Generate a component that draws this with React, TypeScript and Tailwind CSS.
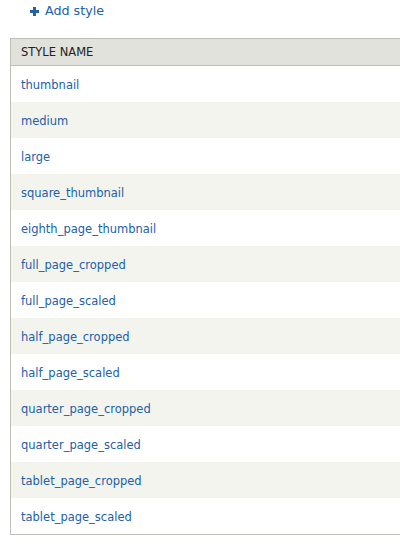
import React from "react";

const rows = [
  "thumbnail",
  "medium",
  "large",
  "square_thumbnail",
  "eighth_page_thumbnail",
  "full_page_cropped",
  "full_page_scaled",
  "half_page_cropped",
  "half_page_scaled",
  "quarter_page_cropped",
  "quarter_page_scaled",
  "tablet_page_cropped",
  "tablet_page_scaled",
];

export default function App() {
  return (
    <div
      className="w-[400px] h-[551px] bg-white overflow-hidden"
      style={{ fontFamily: '"Lucida Grande", "DejaVu Sans", "Liberation Sans", sans-serif' }}
    >
      <div className="flex items-center h-[21px] pl-[30px] pt-[1px] text-[12.7px] text-[#2260a8]">
        <svg width="9" height="9" viewBox="0 0 9 9" className="mr-[6px]">
          <rect x="3" y="0" width="3" height="9" fill="#2260a8" />
          <rect x="0" y="3" width="9" height="3" fill="#2260a8" />
        </svg>
        <span>Add style</span>
      </div>
      <div className="mt-[17px] ml-[10px] w-[420px] border border-[#bfbfba] border-r-0">
        <div className="h-[27px] flex items-center pl-[10px] pt-[1px] bg-[#e1e2dc] border-b border-[#bfbfba] text-[11.5px] text-[#222] uppercase">
          Style Name
        </div>
        {rows.map((r, i) => (
          <div
            key={r}
            className={`h-[36px] flex items-center pl-[10px] pt-[3px] text-[11.5px] text-[#2260a8] ${
              i % 2 === 1 ? "bg-[#f3f4ee]" : "bg-white"
            }`}
          >
            {r}
          </div>
        ))}
      </div>
    </div>
  );
}
